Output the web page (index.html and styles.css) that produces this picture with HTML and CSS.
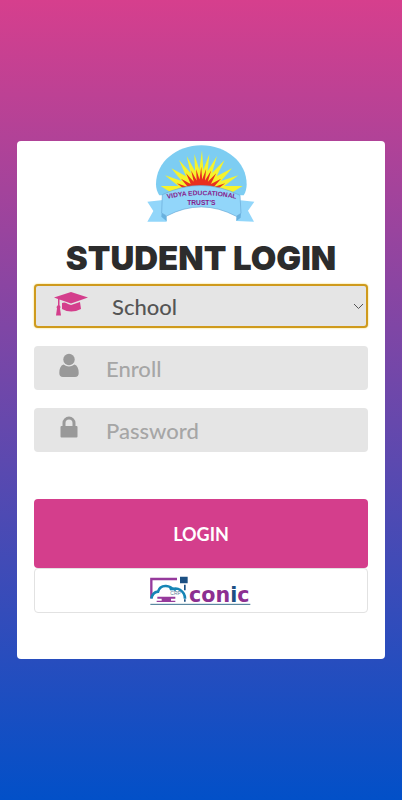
FILE: index.html
```html
<!DOCTYPE html>
<html lang="en">
<head>
<meta charset="utf-8">
<meta name="viewport" content="width=device-width, initial-scale=1">
<title>Student Login</title>
<link rel="stylesheet" href="styles.css">
</head>
<body>
<main class="card">
  <svg class="crest" viewBox="0 15 366 273" role="img" aria-label="Vidya Educational Trust's">
    <defs>
      <path id="rays" d="M62 150L115 150L75 118L125 135L94 97L138 121L117 72L152 111L140 60L165 105L163 54L178 101L186 43L190 101L208 54L203 105L231 60L216 111L254 72L230 121L276 97L243 135L295 118L253 150L308 150L250 185L118 185Z"/>
      <path id="line1" d="M66 192Q184 163 304 192"/>
    </defs>
    <path class="sky" d="M48 145C48 78 110 28 184 28S320 78 320 145Q320 165 311 178H58Q48 163 48 145Z"/>
    <use class="ray-yellow" href="#rays"/>
    <use class="ray-red" href="#rays" transform="translate(61 64) scale(.66)"/>
    <path class="ribbon" d="M22 197L69 192L80 257L22 257L40 225Z M301 193L343 197L324 224L342 257L289 255Z"/>
    <path class="fold" d="M65 231L80 240V256L64 242Z M289 240L303 232L302 245L289 255Z"/>
    <path class="ribbon ribbon-edge" d="M67 176Q184 120 300 178L303 232L289 241Q184 185 80 240L65 231Z"/>
    <text class="crest-text" text-anchor="middle"><textPath href="#line1" startOffset="50%">VIDYA EDUCATIONAL</textPath></text>
    <text class="crest-text" text-anchor="middle" x="184" y="206">TRUST'S</text>
  </svg>

  <h1 class="title">STUDENT LOGIN</h1>

  <form class="form">
    <div class="field field-active">
      <label class="field-icon" for="level" aria-label="Level">
        <svg width="36" height="26" viewBox="0 0 36 26">
          <path d="M18 1L35 6.500 18 12.500 6.500 8.500V14L7.500 16 7 17.500 8 24.500H3L4 17.500 3.500 16 5 14V8L1 6.500Z"/>
          <path d="M9 12Q12 10.500 15 13L18 14 27 11 28 18Q18 23 9 18Z"/>
        </svg>
      </label>
      <select class="control select" id="level">
        <option>School</option>
        <option>College</option>
      </select>
      <svg class="chevron" width="11" height="7" viewBox="0 0 11 7"><path d="M1 1L5.500 5.500 10 1"/></svg>
    </div>
    <div class="field">
      <label class="field-icon" for="enroll" aria-label="Enroll">
        <svg width="20" height="26" viewBox="0 0 20 26">
          <circle cx="10" cy="6.500" r="5.700"/>
          <path d="M4.500 11.500Q10 15.500 15.500 11.500Q19.700 13 19.700 20Q19.700 24 16 24H4Q.3 24 .3 20Q.3 13 4.500 11.500Z"/>
        </svg>
      </label>
      <input class="control" id="enroll" type="text" placeholder="Enroll">
    </div>
    <div class="field">
      <label class="field-icon" for="password" aria-label="Password">
        <svg width="18" height="26" viewBox="0 0 18 26">
          <path fill-rule="evenodd" d="M2.500 11V8A6.500 6.500 0 0 1 15.500 8V11H16.500Q17.500 11 17.500 12V21.500Q17.500 22.500 16.500 22.500H1.500Q.5 22.500 .5 21.500V12Q.5 11 1.500 11ZM5.500 11H12.500V8A3.500 3.500 0 0 0 5.500 8Z"/>
        </svg>
      </label>
      <input class="control" id="password" type="password" placeholder="Password">
    </div>
    <button class="submit" type="submit">LOGIN</button>
  </form>

  <a class="vendor" href="#" aria-label="CRP iconic">
    <svg class="vendor-logo" width="120" height="44" viewBox="0 12 360 132">
      <path class="screen" d="M31 100V42H108"/>
      <path class="stand" d="M49 95H103V101H90V107H103V111H47V107H62V101H49Z"/>
      <path class="cloud" d="M31 101Q34 82 51 80Q56 62 75 63Q90 65 94 72Q108 68 118 75Q132 84 132 101M86 73Q95 68 105 76"/>
      <path class="navy" d="M117 35H140V55H117ZM129 59H134V76H129ZM129 103H134V110H129Z"/>
      <text class="crp" x="88" y="90">CRP</text>
      <text class="iconic" x="144" y="110">con<tspan class="navy">i</tspan>c</text>
      <path class="rule" d="M28 118H328"/>
    </svg>
  </a>
</main>
</body>
</html>
```
FILE: styles.css
```css
* {
  box-sizing: border-box;
}

body {
  margin: 0;
  min-height: 100vh;
  padding: 16px;
  display: flex;
  align-items: center;
  justify-content: center;
  background: linear-gradient(#d63f8d, #0250c8);
  font-family: Lato, sans-serif;
}

.card {
  flex: 1;
  min-width: 0;
  max-width: 480px;
  margin: 0 1px;
  padding: 0 17px 46px;
  display: flex;
  flex-direction: column;
  background: #fff;
  border-radius: 4px;
}

.crest {
  width: 122px;
  align-self: center;
}

.sky { fill: #7dcdf2; }
.ray-yellow { fill: #f6f32c; }
.ray-red { fill: #e8301f; }
.ribbon { fill: #92d6fa; }
.ribbon-edge { stroke: #69a9d6; stroke-width: 2; }
.fold { fill: #68b1df; }

.crest-text {
  fill: #86218c;
  font: bold 20px "Liberation Sans", sans-serif;
}

.title {
  margin: 0;
  font-family: Inter, sans-serif;
  font-size: 33px;
  line-height: 52px;
  font-weight: 900;
  text-align: center;
  white-space: nowrap;
  color: #2c2c2c;
}

.form {
  display: flex;
  flex-direction: column;
  gap: 18px;
}

.field {
  display: flex;
  align-items: center;
  height: 44px;
  background: #e5e5e5;
  border-radius: 4px;
  color: #999;
}

.field-active {
  color: #d43e8c;
  box-shadow: inset 0 0 0 2px #cf9a1c, 0 0 2px #f3d34a;
}

.field-icon {
  flex: none;
  width: 70px;
  height: 30px;
  display: flex;
  justify-content: center;
}

.field-active .field-icon {
  padding-left: 4px;
}

.field-icon svg {
  flex: none;
  fill: currentColor;
}

.control {
  flex: 1;
  min-width: 0;
  height: 100%;
  padding: 0 2px;
  border: 0;
  outline: 0;
  background: none;
  appearance: none;
  font: 500 22px Lato, sans-serif;
  color: #555;
}

.control::placeholder {
  color: #a6a6a6;
  opacity: 1;
}

.select {
  padding-left: 8px;
}

.chevron {
  flex: none;
  margin-right: 4px;
  fill: none;
  stroke: #555;
}

.submit {
  height: 69px;
  margin-top: 29px;
  border: 0;
  border-radius: 4px;
  background: #d43e8c;
  color: #fff;
  font: bold 18px Lato, sans-serif;
}

.vendor {
  display: flex;
  justify-content: center;
  height: 45px;
  border: 1px solid #e2e2e2;
  border-radius: 4px;
}

.screen { fill: none; stroke: #963a9c; stroke-width: 7; }
.stand { fill: #963a9c; }
.cloud { fill: none; stroke: #1685b5; stroke-width: 8; }
.navy { fill: #1c5083; }
.rule { stroke: #3a6f8c; stroke-width: 3; }

.crp {
  fill: #5d7896;
  font: 15px "Liberation Sans", sans-serif;
}

.iconic {
  fill: #8c2f91;
  font: bold 62px "DejaVu Sans", sans-serif;
}
```
